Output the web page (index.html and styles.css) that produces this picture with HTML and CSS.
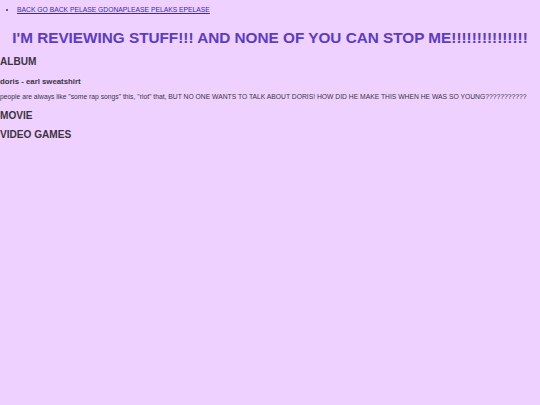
FILE: index.html
```html
<!DOCTYPE html>
<html>
<head>
<meta charset="utf-8">
<link rel="stylesheet" href="styles.css">
</head>
<body>
<ul class="nav">
  <li><a href="#">BACK GO BACK PELASE GDONAPLEASE PELAKS EPELASE</a></li>
</ul>
<h1 class="title">I'M REVIEWING STUFF!!! AND NONE OF YOU CAN STOP ME!!!!!!!!!!!!!!!</h1>
<h2 class="section section-first">ALBUM</h2>
<h3 class="item">doris - earl sweatshirt</h3>
<p class="review">people are always like "some rap songs" this, "riot" that, BUT NO ONE WANTS TO TALK ABOUT DORIS! HOW DID HE MAKE THIS WHEN HE WAS SO YOUNG???????????</p>
<h2 class="section section-after-review">MOVIE</h2>
<h2 class="section">VIDEO GAMES</h2>
</body>
</html>
```
FILE: styles.css
```css
html, body {
  margin: 0;
  padding: 0;
  background: #eed1fe;
  font-family: "Liberation Sans", Arial, sans-serif;
  color: #3c3444;
}
.nav {
  margin: 0;
  padding: 6px 0 0 17px;
  font-size: 6.75px;
}
.nav a {
  color: #3a28b8;
}
.title {
  margin: 16px 0 0;
  text-align: center;
  font-size: 15.3px;
  color: #5a3cc6;
}
.section {
  margin: 8px 0 0;
  font-size: 10.1px;
}
.section-first {
  margin-top: 9px;
}
.section-after-review {
  margin-top: 10px;
}
.item {
  margin: 10px 0 0;
  font-size: 7.8px;
}
.review {
  margin: 7px 0 0;
  font-size: 6.75px;
}
```
